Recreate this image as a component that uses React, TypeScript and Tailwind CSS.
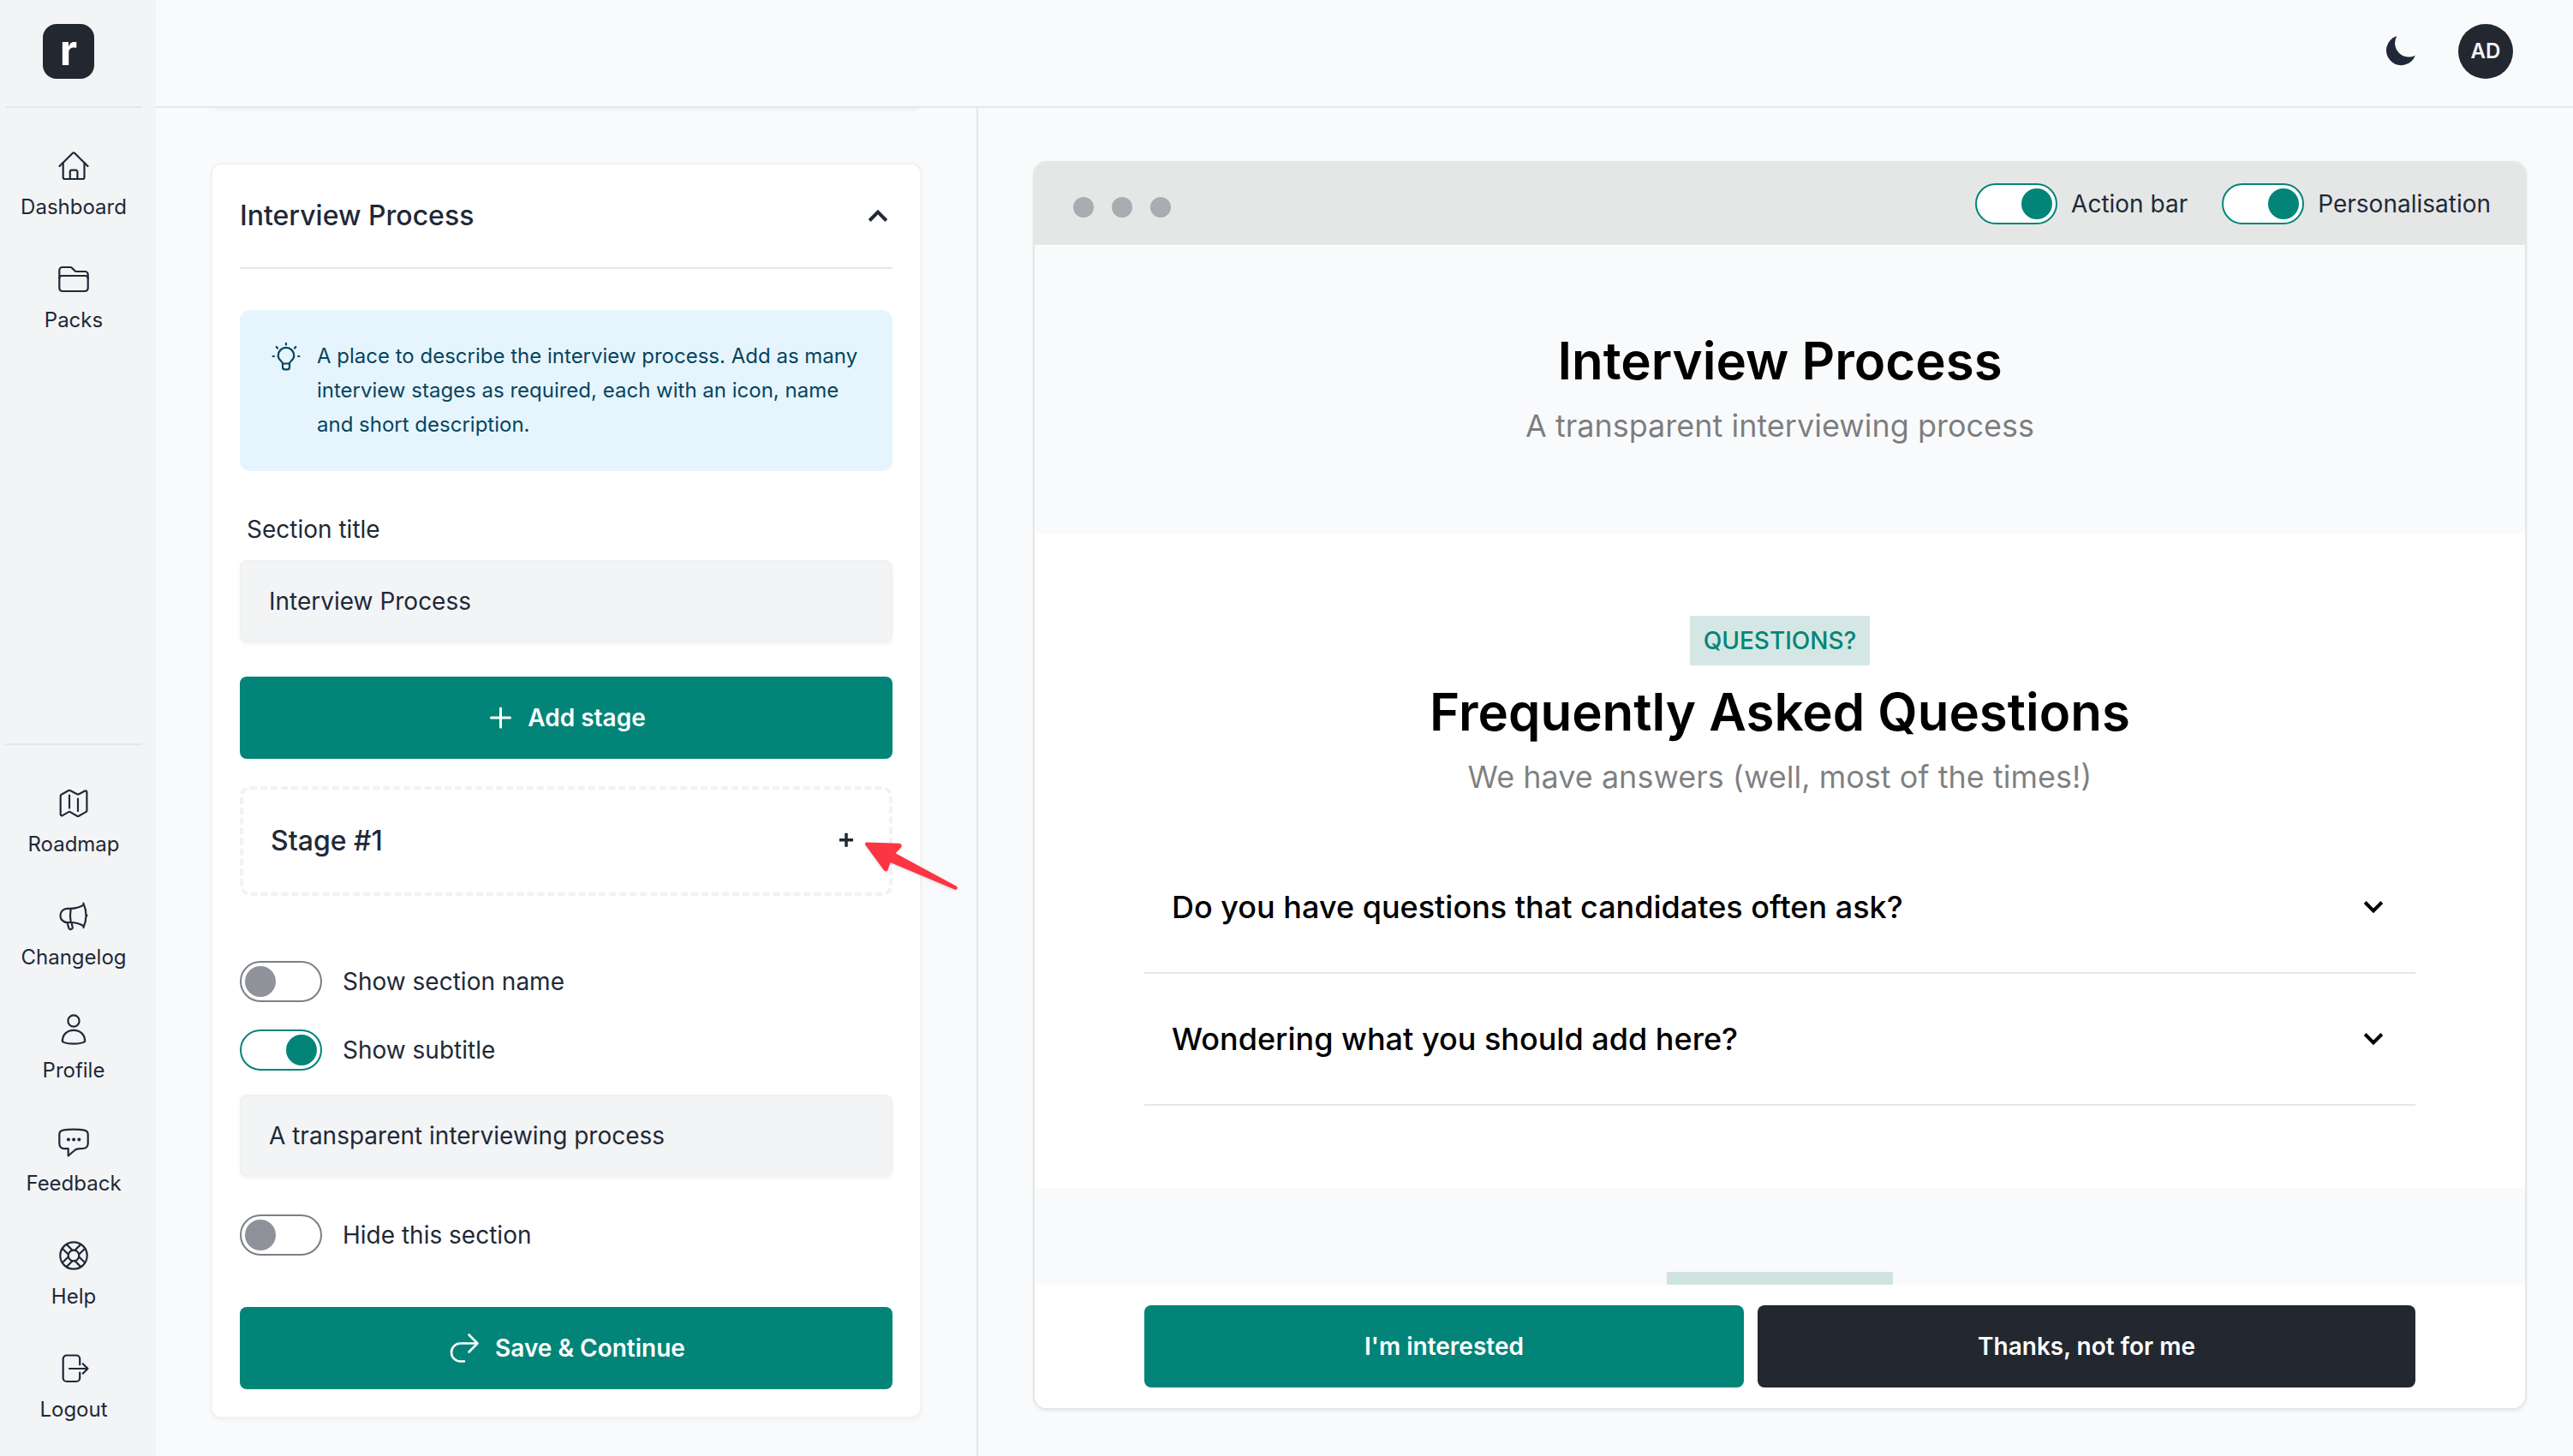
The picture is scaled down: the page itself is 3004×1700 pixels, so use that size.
import { useState } from "react";
import type { ReactNode } from "react";

type IconProps = { children: ReactNode; className?: string };

const Icon = ({ children, className = "size-10" }: IconProps) => (
    <svg
        viewBox="0 0 40 40"
        className={className}
        fill="none"
        stroke="currentColor"
        strokeWidth="2.2"
        strokeLinecap="round"
        strokeLinejoin="round"
        aria-hidden="true"
    >
        {children}
    </svg>
);

const HomeIcon = () => (
    <Icon>
        <path d="M3.5 20 18.6 5a2 2 0 0 1 2.8 0L36.5 20" />
        <path d="M7.7 16v17a2 2 0 0 0 2 2h20.8a2 2 0 0 0 2-2V16" />
        <path d="M15.8 35v-8.500a1.800 1.800 0 0 1 1.800-1.800h5a1.800 1.800 0 0 1 1.800 1.800V35" />
    </Icon>
);

const FolderIcon = () => (
    <Icon>
        <path d="M3.3 30.5v-21A3.5 3.5 0 0 1 6.8 6h9.4q1.2 0 2 .9l3 3.2q.8.9 2 .9h10a3.5 3.5 0 0 1 3.5 3.5v16a3.5 3.5 0 0 1-3.5 3.5H6.8a3.5 3.5 0 0 1-3.5-3.5Z" />
        <path d="M3.3 18.8a2.8 2.8 0 0 1 2.8-2.8h27.8a2.8 2.8 0 0 1 2.8 2.8" />
    </Icon>
);

const MapIcon = () => (
    <Icon>
        <path d="M4.7 11.2q0-1 .9-1.4L14 5q1-.5 2 0l8 4.2q1 .5 2 0l7-3.6q2.3-.8 2.4 1.4v21.4q0 1-.9 1.5L26 34.8q-1 .5-2 0l-8-4.7q-1-.5-2 0l-7 4q-2.2.8-2.3-1.4Z" />
        <path d="M15 10.5v15M25 14.7V29" />
    </Icon>
);

const MegaphoneIcon = () => (
    <Icon>
        <path d="M16.7 10.8h-4.2a8.1 8.1 0 0 0 0 16.2h4.2c-1-5.4-1-10.8 0-16.2Z" />
        <path d="M16.7 10.8c5 0 10-1.3 14.7-4M16.7 27c5 0 10 1.3 14.7 4" />
        <path d="M31.4 4.6c4 9.2 4 19.2 0 28.4M34.3 17.6q2.2 1.2 0 2.6" />
        <path d="m12.5 27 1.7 6.3c.4 1.5 1.5 2 2.6 1.7 1.5-.3 2.2-1.2 1.9-2.5L17.4 27" />
    </Icon>
);

const ProfileIcon = () => (
    <Icon>
        <circle cx="20" cy="10" r="6.6" />
        <path d="M6.8 34c0-8 5.7-13.2 13.2-13.2S33.2 26 33.2 34c-4 3.4-22.4 3.4-26.4 0Z" />
    </Icon>
);

const FeedbackIcon = () => (
    <Icon>
        <path d="M8.6 5.3C14 4.3 26 4.3 31.4 5.3c3.5.5 5.3 2.2 5.3 5.2v10c0 4.4-1.5 6.2-6 6.5l-5.5.3c-1.7.1-2.7.5-4 1.7l-7.5 6.5v-8.3H9.3c-4.2-.2-6-2-6-6.2V10.5c0-3 1.8-4.7 5.3-5.2Z" />
        <g fill="currentColor" stroke="none">
            <circle cx="13.9" cy="16.4" r="2" />
            <circle cx="20.1" cy="16.4" r="2" />
            <circle cx="26.3" cy="16.4" r="2" />
        </g>
    </Icon>
);

const HelpIcon = () => (
    <Icon>
        <circle cx="20" cy="20" r="15.7" />
        <circle cx="20" cy="20" r="6.3" />
        {[45, 135, 225, 315].map((angle) => (
            <path key={angle} transform={`rotate(${angle} 20 20)`} d="M16.6 14.5V4.8M23.4 14.5V4.8" />
        ))}
    </Icon>
);

const LogoutIcon = () => (
    <Icon>
        <path d="M27.2 15.5V8.5a4 4 0 0 0-4-4H11.7a4 4 0 0 0-4 4v22.5a4 4 0 0 0 4 4h11.5a4 4 0 0 0 4-4v-6.5" />
        <path d="M15 20h21.5M30.7 14.3l5.8 5.7-5.8 5.7" />
    </Icon>
);

const BulbIcon = () => (
    <Icon className="size-10 shrink-0">
        <path d="M16 28.5c0-2.5-5.3-4.2-5.3-9.3a9.3 9.3 0 0 1 18.6 0c0 5.1-5.3 6.8-5.3 9.3v4.3a2.5 2.5 0 0 1-2.5 2.5h-3a2.5 2.5 0 0 1-2.5-2.5Z" />
        <path d="M16 28.5h8M20 4.8v1.7M8.7 9l1.3 1.6M31.3 9 30 10.6M4.6 20h1.3M34.1 20h1.3" />
    </Icon>
);

const topLinks = [
    { label: "Dashboard", icon: <HomeIcon /> },
    { label: "Packs", icon: <FolderIcon /> },
];

const bottomLinks = [
    { label: "Roadmap", icon: <MapIcon /> },
    { label: "Changelog", icon: <MegaphoneIcon /> },
    { label: "Profile", icon: <ProfileIcon /> },
    { label: "Feedback", icon: <FeedbackIcon /> },
    { label: "Help", icon: <HelpIcon /> },
    { label: "Logout", icon: <LogoutIcon /> },
];

const questions = [
    "Do you have questions that candidates often ask?",
    "Wondering what you should add here?",
];

const NavLinks = ({ links }: { links: typeof topLinks }) => (
    <ul className="pt-6">
        {links.map((link) => (
            <li key={link.label} className="h-[132px] pt-6">
                <a href="#" className="flex flex-col items-center gap-3 text-2xl leading-8">
                    {link.icon}
                    {link.label}
                </a>
            </li>
        ))}
    </ul>
);

const Sidebar = () => (
    <nav className="flex w-[182px] shrink-0 flex-col bg-[#f3f4f6] pr-4 pl-1.5">
        <div className="flex h-[126px] shrink-0 justify-center border-b-2 border-[#e5e6e8] pt-7 pr-3">
            <a
                href="#"
                className="flex h-16 w-[60px] items-center justify-center rounded-2xl bg-[#232830] pb-1 text-[50px] leading-none font-bold text-white"
            >
                r
            </a>
        </div>
        <NavLinks links={topLinks} />
        <div className="mt-auto border-t-2 border-[#e5e6e8] pb-3.5">
            <NavLinks links={bottomLinks} />
        </div>
    </nav>
);

type ToggleProps = { id: string; label: string; defaultOn?: boolean; className: string };

const Toggle = ({ id, label, defaultOn = false, className }: ToggleProps) => {
    const [on, setOn] = useState(defaultOn);
    return (
        <div className={`flex items-center text-[28px] leading-10 ${className}`}>
            <input
                id={id}
                type="checkbox"
                checked={on}
                onChange={() => setOn(!on)}
                className="h-12 w-24 shrink-0 cursor-pointer appearance-none rounded-full border-2 border-[#7a7f88] bg-white p-1 before:block before:size-9 before:rounded-full before:bg-[#8f9299] checked:border-[#028578] checked:before:translate-x-12 checked:before:bg-[#028578]"
            />
            <label htmlFor={id}>{label}</label>
        </div>
    );
};

const ChevronDown = ({ className = "" }: { className?: string }) => (
    <svg viewBox="0 0 24 16" className={`h-4 w-6 ${className}`} fill="none" stroke="currentColor" strokeWidth="4" aria-hidden="true">
        <path d="m2.2 2.5 9.8 9.8 9.8-9.8" />
    </svg>
);

const fieldClass =
    "h-24 w-full rounded-lg border-2 border-[#f1f1f1] bg-[#f3f4f6] px-8 text-[28px] shadow-[0_2px_4px_rgba(0,0,0,0.05)]";

const solidButton =
    "flex h-24 items-center justify-center gap-4 rounded-lg text-[28px] font-semibold text-white";

const Editor = () => (
    <section className="overflow-hidden border-r-2 border-[#e5e7e9] px-16">
        {/* bottom edge of the card scrolled out above */}
        <div className="mx-1 -mt-1 h-1 rounded-b-xl bg-white shadow-[0_2px_4px_rgba(0,0,0,0.06)]" />
        <div className="mt-16 rounded-xl border-2 border-[#f2f2f2] bg-white px-8 pb-8 shadow-[0_2px_4px_rgba(0,0,0,0.04)]">
            <button type="button" className="flex h-[122px] w-full items-center justify-between border-b-2 border-[#e5e6e6] pr-[5px] text-[32px] font-medium">
                Interview Process
                <ChevronDown className="rotate-180" />
            </button>

            <div className="mt-12 flex gap-4 rounded-xl bg-[#e6f5fd] p-[34px] text-2xl leading-10 text-[#06455f]">
                <BulbIcon />
                <p>
                    A place to describe the interview process. Add as many interview stages as required, each with an
                    icon, name and short description.
                </p>
            </div>

            <label htmlFor="section-title" className="mt-12 mb-4 block px-2 text-[28px] leading-10">
                Section title
            </label>
            <input id="section-title" type="text" defaultValue="Interview Process" className={fieldClass} />

            <button type="button" className={`mt-10 w-full bg-[#028578] ${solidButton}`}>
                <svg viewBox="0 0 32 32" className="size-8" stroke="currentColor" strokeWidth="3" strokeLinecap="round" aria-hidden="true">
                    <path d="M16.5 5v22M5.500 16h22" />
                </svg>
                Add stage
            </button>

            <div className="relative mt-8">
                <button type="button" className="flex h-32 w-full items-center justify-between rounded-xl border-4 border-dashed border-[#f2f2f2] pr-10 pl-8 text-[32px] font-medium">
                    Stage #1
                    <svg viewBox="0 0 20 20" className="size-5" stroke="currentColor" strokeWidth="3.5" aria-hidden="true">
                        <path d="M10 .7v16M2 8.700h16" />
                    </svg>
                </button>
                <svg viewBox="0 0 112 60" className="absolute top-[64px] -right-[78px] h-[60px] w-28 drop-shadow" aria-hidden="true">
                    <path
                        d="M4.200 1.600 41.500 2.800c3 .2 4 2.500 2.500 4.800l-6.500 6.700 70.800 38.200c3 2 1.200 5-1.800 4L31.500 25l-2.800 8.200c-1 2.800-3.200 2.800-4.800.8L2.700 5c-1.200-1.800-.7-3.500 1.500-3.400Z"
                        fill="#fb3542"
                    />
                </svg>
            </div>

            <Toggle id="show-name" label="Show section name" className="mt-[76px] gap-6" />
            <Toggle id="show-subtitle" label="Show subtitle" defaultOn className="mt-8 gap-6" />
            <input type="text" aria-label="Subtitle" defaultValue="A transparent interviewing process" className={`mt-7 block ${fieldClass}`} />
            <Toggle id="hide-section" label="Hide this section" className="mt-11 gap-6" />

            <button type="button" className={`mt-[60px] w-full bg-[#028578] ${solidButton}`}>
                <Icon>
                    <path strokeWidth="2.6" d="M20 35.500h-4.500a10.500 10.500 0 0 1-10.500-10.500 10.500 10.500 0 0 1 10.500-10.500H35.500M25.500 4.500l10 10-10 10" />
                </Icon>
                Save &amp; Continue
            </button>
        </div>
    </section>
);

const SectionHeading = ({ title, subtitle }: { title: string; subtitle: string }) => (
    <>
        <h2 className="text-6xl leading-[76px] font-semibold">{title}</h2>
        <p className="mt-2 text-4xl leading-[60px] text-black/50">{subtitle}</p>
    </>
);

const Preview = () => (
    <section className="flex min-w-0 flex-col pt-[62px] pr-[54px] pb-[54px] pl-16">
        <div className="flex min-h-0 flex-1 flex-col overflow-hidden rounded-2xl border-2 border-[#e5e7e6] bg-white shadow-[0_2px_4px_rgba(0,0,0,0.06)]">
            <div className="flex h-24 shrink-0 items-center gap-10 bg-[#e5e7e6] pr-10 pl-[45px]">
                <div className="mr-auto flex gap-[21px] pt-2">
                    <span className="size-6 rounded-full bg-[#a9acb1]" />
                    <span className="size-6 rounded-full bg-[#a9acb1]" />
                    <span className="size-6 rounded-full bg-[#a9acb1]" />
                </div>
                <Toggle id="action-bar" label="Action bar" defaultOn className="gap-4" />
                <Toggle id="personalisation" label="Personalisation" defaultOn className="gap-4" />
            </div>

            <div className="min-h-0 flex-1 overflow-hidden text-center text-black">
                <div className="border-t border-white bg-[#f9fafc] py-24">
                    <SectionHeading title="Interview Process" subtitle="A transparent interviewing process" />
                </div>

                <div className="px-32 py-24">
                    <span className="mx-auto mb-4 block w-fit bg-[#d5e7e4] px-4 py-2 text-[28px] leading-[42px] font-medium text-[#028578]">
                        QUESTIONS?
                    </span>
                    <SectionHeading title="Frequently Asked Questions" subtitle="We have answers (well, most of the times!)" />
                    <div className="mt-[46px]">
                        {questions.map((question) => (
                            <button
                                key={question}
                                type="button"
                                className="flex h-[154px] w-full items-center justify-between border-b-2 border-[#e5e6e6] pr-[37px] pl-8 text-4xl font-medium"
                            >
                                {question}
                                <ChevronDown />
                            </button>
                        ))}
                    </div>
                </div>

                <div className="bg-[#f9fafc] pt-[98px] pb-24">
                    <div className="mx-auto h-[58px] w-[264px] bg-[#cfe3e0]" />
                </div>
            </div>

            <div className="flex shrink-0 gap-4 bg-white px-32 py-6">
                <button type="button" className={`flex-auto bg-[#028578] ${solidButton}`}>
                    I'm interested
                </button>
                <button type="button" className={`flex-auto bg-[#232830] ${solidButton}`}>
                    Thanks, not for me
                </button>
            </div>
        </div>
    </section>
);

const Header = () => (
    <header className="relative z-10 flex h-[126px] shrink-0 items-center justify-end gap-12 border-b-2 border-[#e5e7e9] bg-[#f9fafc] pr-[70px] pb-1">
        <button type="button" aria-label="Toggle dark mode">
            <svg viewBox="0 0 40 40" className="size-10" fill="currentColor" aria-hidden="true">
                <path d="M16.3 2.2A17.4 17.4 0 1 0 37.8 24.7A16.2 16.2 0 0 1 16.3 2.2Z" />
            </svg>
        </button>
        <button type="button" className="size-16 rounded-full bg-[#232830] text-2xl font-semibold text-[#f3f4f6]">
            AD
        </button>
    </header>
);

export default function App() {
    return (
        <div className="flex h-screen overflow-hidden bg-[#f9fafc] font-['Inter',sans-serif] text-[#1f2937]">
            <Sidebar />
            <div className="flex min-w-0 flex-1 flex-col">
                <Header />
                <main className="grid min-h-0 flex-1 grid-cols-[960px_1fr] grid-rows-[100%]">
                    <Editor />
                    <Preview />
                </main>
            </div>
        </div>
    );
}
